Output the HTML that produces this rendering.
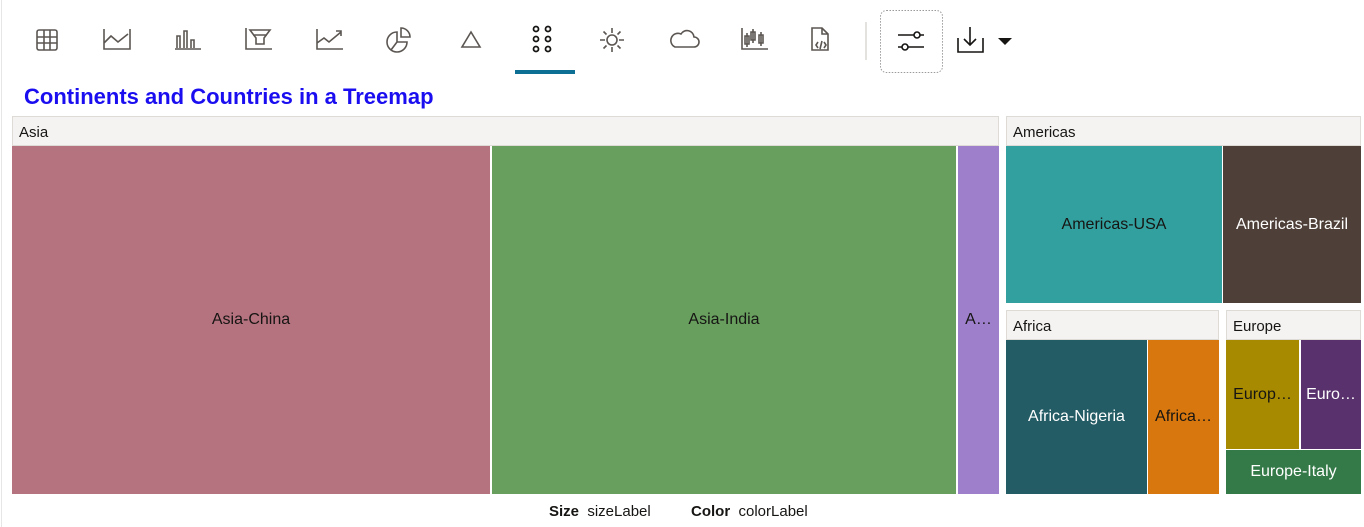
<!DOCTYPE html>
<html><head><style>
body{margin:0;width:1364px;height:527px;background:#fff;position:relative;overflow:hidden;font-family:"Liberation Sans",sans-serif;}
.a{position:absolute;box-sizing:border-box;}
.h{background:#f4f3f1;border:1px solid #dedbd7;font-size:15px;color:#161513;padding:7px 0 0 6px;}
.c{display:flex;align-items:center;justify-content:center;font-size:16px;color:#161513;white-space:nowrap;overflow:hidden;}
.w{color:#fff;}
svg{position:absolute;}
</style></head><body>
<div class="a" style="left:1px;top:0;width:1px;height:527px;background:#e6e6e6"></div>
<svg width="1364" height="80" style="left:0;top:0" fill="none" stroke="#5b5652" stroke-width="1.6">
<rect x="37" y="30" width="20" height="20" rx="2"/><path d="M37 37h20M37 43h20M44 30v20M50 30v20"/>
<path d="M104 29v20h26v-20M104 43l7-7 7 6 10-8"/>
<path d="M175 49h26M177 48v-12h3v12M184 48v-17h3v17M191 48v-8h3v8"/>
<path d="M246 28v21h26M250 30h20l-6 8v6h-8v-6z M253 35h14"/>
<path d="M317 29v20h26M317 43l7-5 5 4 12-10M336 31h5v5"/>
<path d="M397 32a10 10 0 1 0 10 10h-10z M401 28a9 9 0 0 1 9 9h-9z M397 42l-6 8M397 42h10"/>
<path d="M471 32l-9 15h18z"/>
<g stroke="#161513" stroke-width="1.8"><circle cx="536" cy="29" r="2.5"/><circle cx="548" cy="29" r="2.5"/><circle cx="536" cy="39" r="2.5"/><circle cx="548" cy="39" r="2.5"/><circle cx="536" cy="49" r="2.5"/><circle cx="548" cy="49" r="2.5"/></g>
<circle cx="612" cy="40" r="5"/><path d="M612 28v5M612 47v5M600 40h5M619 40h5M603.5 31.5l3 3M617.5 45.5l3 3M620.5 31.5l-3 3M606.5 45.5l-3 3"/>
<path d="M675 47h19a5 5 0 0 0 0-10 7 7 0 0 0-13-3 6 6 0 0 0-6 13z"/>
<path d="M742 28v21h26M747 33v14M745 36h4v8h-4zM753 29v14M751 32h4v8h-4zM761 32v14M759 35h4v8h-4z"/>
<path d="M812 28h10l6 6v16h-16z M822 28v6h6 M818 42l-2 3 2 3M824 42l2 3-2 3M822 41l-2 8"/>
<path d="M866 22v38" stroke="#dedbd7"/>
<rect x="880.5" y="10.5" width="62" height="62" rx="6" stroke="#9a9a9a" stroke-width="1" stroke-dasharray="1.5 1.5"/>
<g stroke="#161513"><path d="M898 35h26M898 47h26"/><circle cx="917" cy="35" r="3" fill="#fff"/><circle cx="905" cy="47" r="3" fill="#fff"/></g>
<g stroke="#161513"><path d="M958 38v14h25v-14M970 27v18M964 39l6 6 6-6"/></g>
<path d="M998 38h14l-7 7z" fill="#161513" stroke="none"/>
<rect x="515" y="70" width="60" height="4" fill="#0d6f93" stroke="none"/>
</svg>
<div class="a" style="left:24px;top:84px;font-size:22px;font-weight:bold;color:#1a0ef0">Continents and Countries in a Treemap</div>

<div class="a h" style="left:12px;top:116px;width:987px;height:30px">Asia</div>
<div class="a c" style="left:12px;top:146px;width:478px;height:348px;background:#b5727f">Asia-China</div>
<div class="a c" style="left:492px;top:146px;width:464px;height:348px;background:#689f5f">Asia-India</div>
<div class="a c" style="left:958px;top:146px;width:41px;height:348px;background:#9e7fcc">A…</div>

<div class="a h" style="left:1006px;top:116px;width:355px;height:30px">Americas</div>
<div class="a c" style="left:1006px;top:146px;width:216px;height:157px;background:#32a09e">Americas-USA</div>
<div class="a c w" style="left:1223px;top:146px;width:138px;height:157px;background:#4e4038">Americas-Brazil</div>

<div class="a h" style="left:1006px;top:310px;width:213px;height:30px">Africa</div>
<div class="a c w" style="left:1006px;top:340px;width:141px;height:154px;background:#245c65">Africa-Nigeria</div>
<div class="a c" style="left:1148px;top:340px;width:71px;height:154px;background:#d8770e">Africa…</div>

<div class="a h" style="left:1226px;top:310px;width:135px;height:30px">Europe</div>
<div class="a c" style="left:1226px;top:340px;width:73px;height:109px;background:#a78a00">Europ…</div>
<div class="a c w" style="left:1301px;top:340px;width:60px;height:109px;background:#59316d">Euro…</div>
<div class="a c w" style="left:1226px;top:450px;width:135px;height:44px;background:#347a48">Europe-Italy</div>

<div class="a" style="left:549px;top:503px;font-size:15px;color:#161513"><b>Size</b>&nbsp;&nbsp;sizeLabel</div>
<div class="a" style="left:691px;top:503px;font-size:15px;color:#161513"><b>Color</b>&nbsp;&nbsp;colorLabel</div>
</body></html>
